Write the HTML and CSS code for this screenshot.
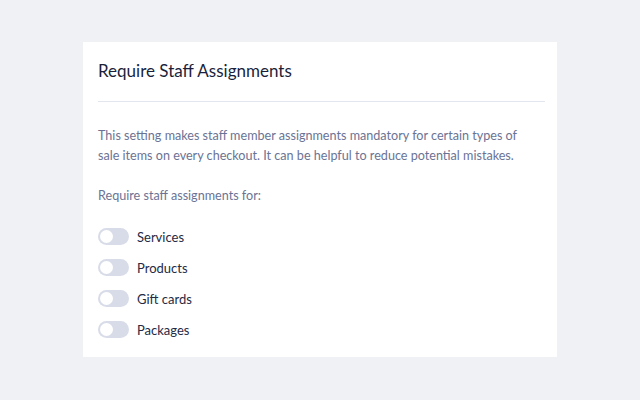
FILE: index.html
```html
<!DOCTYPE html>
<html lang="en">
<head>
  <meta charset="UTF-8">
  <meta name="viewport" content="width=device-width, initial-scale=1.0">
  <title>Require Staff Assignments</title>
  <link rel="stylesheet" href="styles.css">
</head>
<body>

<section class="card">
  <header class="card-header">
    <h1>Require Staff Assignments</h1>
  </header>

  <p class="description">This setting makes staff member assignments mandatory for certain types of sale items on every checkout. It can be helpful to reduce potential mistakes.</p>

  <p class="label">Require staff assignments for:</p>

  <ul class="toggles">
    <li><span class="toggle"></span>Services</li>
    <li><span class="toggle"></span>Products</li>
    <li><span class="toggle"></span>Gift cards</li>
    <li><span class="toggle"></span>Packages</li>
  </ul>
</section>

</body>
</html>
```

FILE: styles.css
```css
body {
  font-family: Lato, "Noto Sans", sans-serif;
  margin: 0;
  padding: 42px 0 0 83px;
  background-color: #eff1f5;
  color: #1b1f3b;
}
.card {
  width: 474px;
  height: 315px;
  box-sizing: border-box;
  background-color: #fff;
  padding: 0 12px 0 15px;
}
.card-header {
  border-bottom: 1px solid #e3e6ee;
  height: 60px;
  padding-bottom: 2px;
  box-sizing: border-box;
  display: flex;
  align-items: center;
}
h1 {
  margin: 0;
  font-size: 17px;
  font-weight: 400;
  color: #1b1f3b;
}
.description {
  max-width: 425px;
  margin: 24px 0 0;
  font-size: 12.6px;
  line-height: 20px;
  color: #6b7394;
}
.label {
  margin: 20px 0 0;
  font-size: 12.6px;
  line-height: 20px;
  color: #6b7394;
}
.toggles {
  list-style: none;
  margin: 15px 0 0;
  padding: 0;
}
.toggles li {
  display: flex;
  align-items: center;
  gap: 8px;
  height: 31px;
  font-size: 13px;
  color: #252a45;
}
.toggle {
  width: 31px;
  height: 17px;
  border-radius: 9px;
  background-color: #d8dce8;
  position: relative;
}
.toggle::after {
  content: "";
  position: absolute;
  left: 2px;
  top: 2px;
  width: 13px;
  height: 13px;
  border-radius: 50%;
  background-color: #fff;
}
```
